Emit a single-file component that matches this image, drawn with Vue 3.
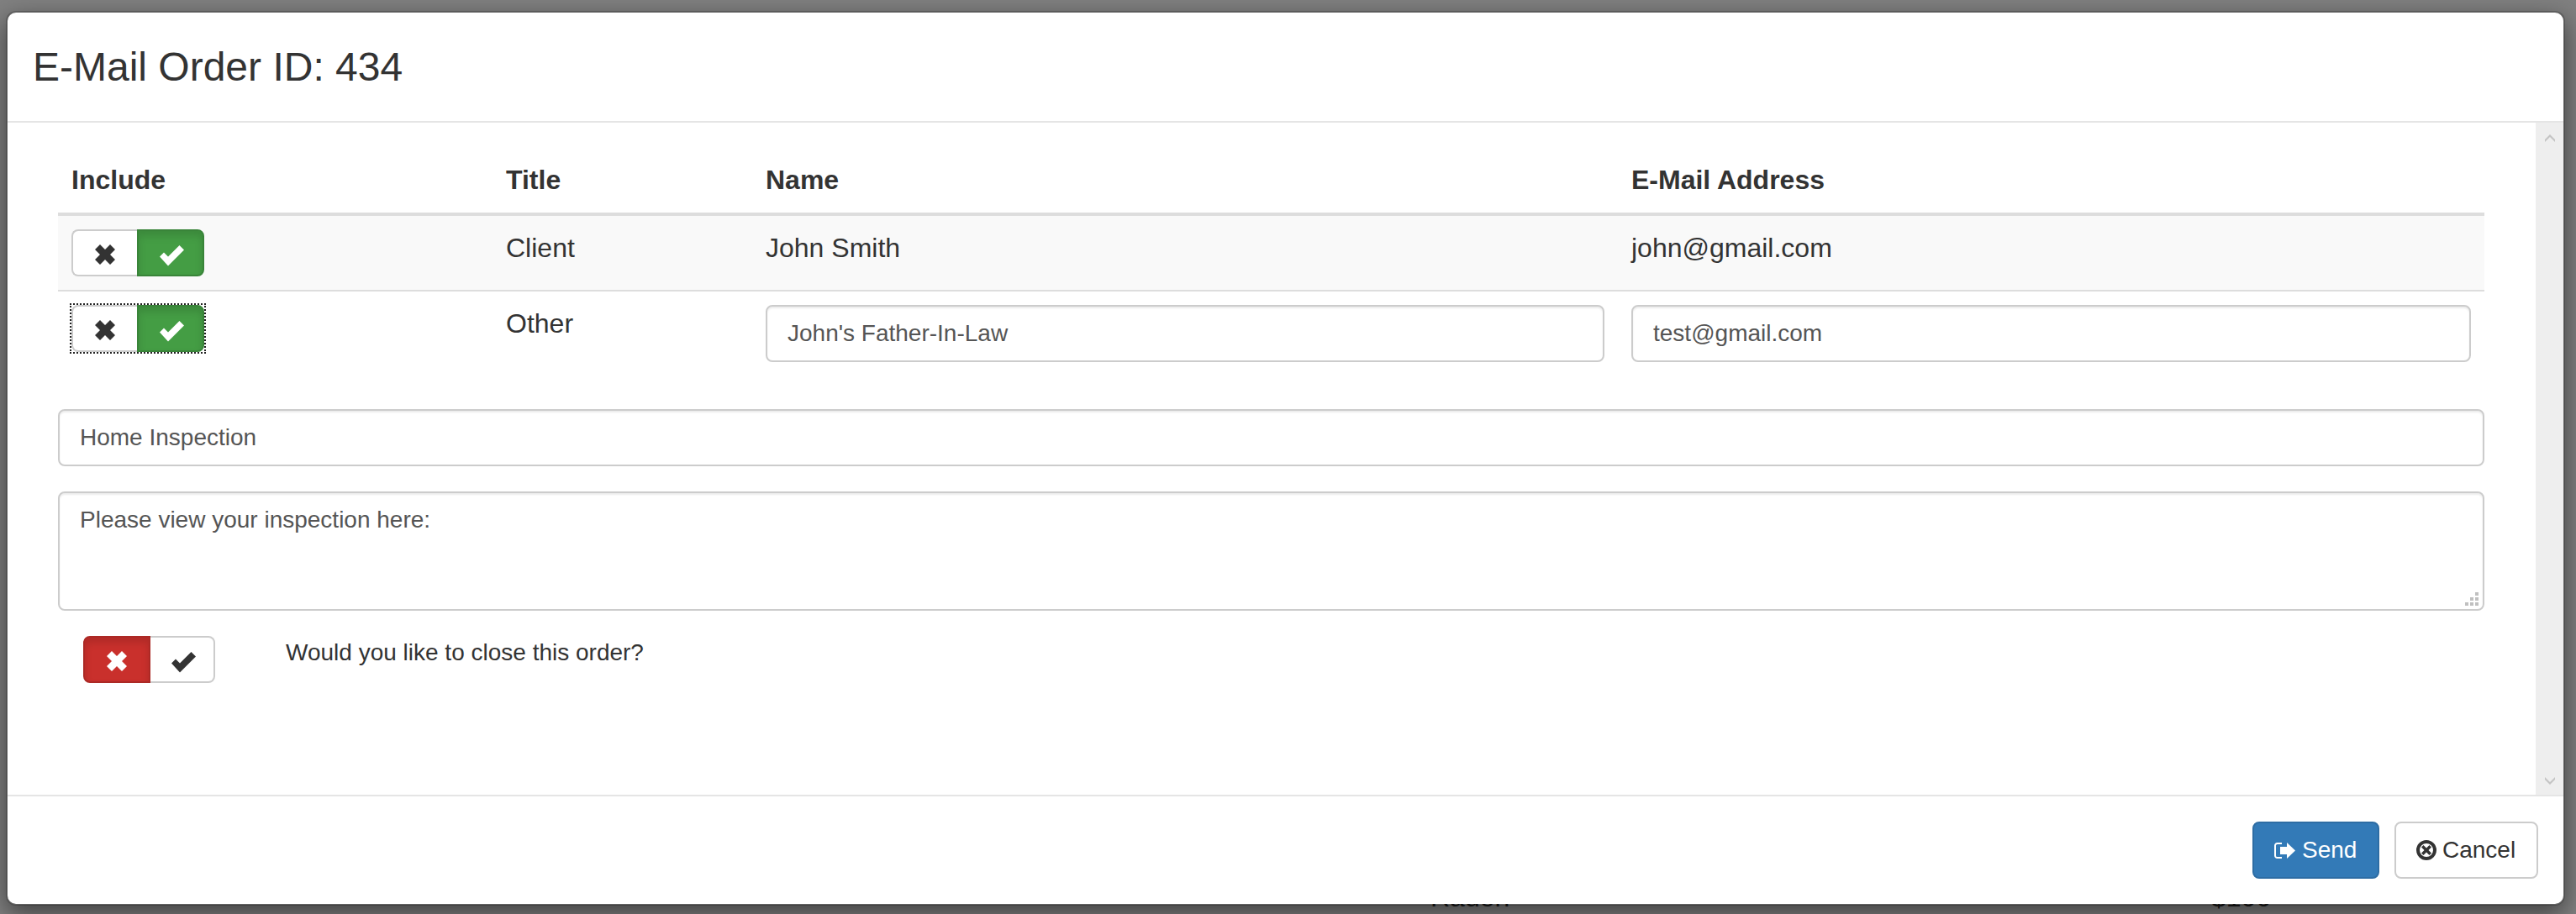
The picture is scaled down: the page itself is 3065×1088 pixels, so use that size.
<script setup>
const X = '0,6 6,0 12,6 18,0 24,6 18,12 24,18 18,24 12,18 6,24 0,18 6,12'
const CHECK = '0,13.5 5,8.5 10,13.5 23.5,0 29,5.5 10,24.5'
</script>

<template>
  <div class="page">
    <span class="under radon">Radon</span>
    <span class="under price">$100</span>

    <div class="modal">
      <header class="modal-header">
        <h3 class="modal-title">E-Mail Order ID: 434</h3>
      </header>

      <div class="modal-middle">
        <main class="modal-body">
          <table class="recipients">
            <colgroup>
              <col class="c1" /><col class="c2" /><col class="c3" /><col class="c4" />
            </colgroup>
            <thead>
              <tr>
                <th>Include</th>
                <th>Title</th>
                <th>Name</th>
                <th>E-Mail Address</th>
              </tr>
            </thead>
            <tbody>
              <tr class="striped">
                <td>
                  <div class="toggle">
                    <span class="seg off plain">
                      <svg class="ico-x" viewBox="0 0 24 24"><polygon :points="X" /></svg>
                    </span>
                    <span class="seg on green">
                      <svg class="ico-ok" viewBox="0 0 29 25"><polygon :points="CHECK" /></svg>
                    </span>
                  </div>
                </td>
                <td>Client</td>
                <td>John Smith</td>
                <td>john@gmail.com</td>
              </tr>
              <tr>
                <td>
                  <div class="toggle focused">
                    <span class="seg off plain">
                      <svg class="ico-x" viewBox="0 0 24 24"><polygon :points="X" /></svg>
                    </span>
                    <span class="seg on green">
                      <svg class="ico-ok" viewBox="0 0 29 25"><polygon :points="CHECK" /></svg>
                    </span>
                  </div>
                </td>
                <td>Other</td>
                <td><input class="control" type="text" value="John's Father-In-Law" /></td>
                <td><input class="control" type="text" value="test@gmail.com" /></td>
              </tr>
            </tbody>
          </table>

          <input class="control subject" type="text" value="Home Inspection" />

          <div class="area-wrap">
            <textarea class="control area">Please view your inspection here:</textarea>
            <svg class="grip" viewBox="0 0 16 16">
              <rect x="12" y="0" width="4" height="4" />
              <rect x="6" y="6" width="4" height="4" />
              <rect x="12" y="6" width="4" height="4" />
              <rect x="0" y="12" width="4" height="4" />
              <rect x="6" y="12" width="4" height="4" />
              <rect x="12" y="12" width="4" height="4" />
            </svg>
          </div>

          <div class="close-row">
            <div class="toggle">
              <span class="seg first red">
                <svg class="ico-x" viewBox="0 0 24 24"><polygon :points="X" /></svg>
              </span>
              <span class="seg last plain">
                <svg class="ico-ok" viewBox="0 0 29 25"><polygon :points="CHECK" /></svg>
              </span>
            </div>
            <span class="close-label">Would you like to close this order?</span>
          </div>
        </main>

        <aside class="scrollbar">
          <svg class="chev" viewBox="0 0 12 9"><path d="M0 6 6 0l6 6v3L6 3 0 9z" /></svg>
          <svg class="chev" viewBox="0 0 12 9"><path d="M0 0l6 6 6-6v3L6 9 0 3z" /></svg>
        </aside>
      </div>

      <footer class="modal-footer">
        <button class="btn primary" type="button">
          <svg class="ico-send" viewBox="0 0 25 19">
            <path class="bracket" d="M9 1H3.5A2.5 2.5 0 0 0 1 3.5v12A2.5 2.5 0 0 0 3.5 18H9" />
            <polygon points="7,5 15,5 15,0 25,9.5 15,19 15,14 7,14" />
          </svg>
          <span>Send</span>
        </button>
        <button class="btn default" type="button">
          <svg class="ico-cancel" viewBox="0 0 24 24">
            <circle class="ring" cx="12" cy="12" r="10" />
            <polygon points="8.5,6 12,9.5 15.5,6 18,8.5 14.5,12 18,15.5 15.5,18 12,14.5 8.5,18 6,15.5 9.5,12 6,8.5" />
          </svg>
          <span>Cancel</span>
        </button>
      </footer>
    </div>
  </div>
</template>

<style>
html,
body {
  margin: 0;
  background: #808080;
}
</style>

<style scoped>
.page {
  position: relative;
  box-sizing: border-box;
  width: 3065px;
  height: 1088px;
  padding: 13px 0 0 7px;
  overflow: hidden;
  background: #808080;
  font-family: "Liberation Sans", Arial, sans-serif;
  color: #333;
}

.under {
  position: absolute;
  top: 1050px;
  font-size: 32px;
  line-height: 36px;
  color: #1a1a1a;
}
.radon { left: 1702px; }
.price { left: 2631px; }

.modal {
  position: relative;
  box-sizing: border-box;
  width: 3045px;
  height: 1065px;
  display: flex;
  flex-direction: column;
  background: #fff;
  background-clip: padding-box;
  border: 2px solid rgba(0, 0, 0, 0.2);
  border-radius: 12px;
  box-shadow: 0 10px 30px rgba(0, 0, 0, 0.5);
}

.modal-header {
  box-sizing: border-box;
  height: 131px;
  flex: none;
  display: flex;
  align-items: center;
  padding: 0 30px;
  border-bottom: 2px solid #e5e5e5;
}
.modal-title {
  margin: 0;
  font-size: 48px;
  font-weight: 400;
  line-height: 53px;
}

.modal-middle {
  flex: 1;
  min-height: 0;
  display: flex;
}
.modal-body {
  box-sizing: border-box;
  flex: 1;
  min-width: 0;
  padding: 30px 61px 0 60px;
}

.scrollbar {
  width: 33px;
  flex: none;
  display: flex;
  flex-direction: column;
  align-items: center;
  justify-content: space-between;
  padding: 14px 0 12px;
  background: #eee;
  box-sizing: border-box;
}
.chev {
  width: 12px;
  height: 9px;
  fill: #c4c4c4;
}

.recipients {
  width: 100%;
  table-layout: fixed;
  border-collapse: separate;
  border-spacing: 0;
  margin-bottom: 40px;
  font-size: 32px;
  line-height: 45px;
}
.c1 { width: 517px; }
.c2 { width: 309px; }
.c3 { width: 1030px; }
.c4 { width: 1031px; }

.recipients th {
  box-sizing: border-box;
  height: 81px;
  padding: 16px;
  text-align: left;
  font-weight: 700;
  border-bottom: 4px solid #ddd;
}
.recipients td {
  padding: 16px;
  vertical-align: top;
}
.striped td {
  background: #f9f9f9;
  border-bottom: 2px solid #ddd;
}

.control {
  box-sizing: border-box;
  display: block;
  width: 100%;
  height: 68px;
  margin: 0;
  padding: 12px 24px;
  background: #fff;
  border: 2px solid #ccc;
  border-radius: 8px;
  box-shadow: inset 0 2px 2px rgba(0, 0, 0, 0.075);
  font-family: inherit;
  font-size: 28px;
  line-height: 40px;
  color: #555;
  outline: none;
}
.area-wrap {
  position: relative;
  margin-top: 30px;
}
.area {
  height: 142px;
  resize: none;
  overflow: hidden;
}
.grip {
  position: absolute;
  right: 7px;
  bottom: 6px;
  width: 16px;
  height: 16px;
  fill: #c0c0c0;
}

.toggle {
  display: inline-flex;
  vertical-align: top;
  height: 56px;
}
.toggle.focused {
  outline: 2px dotted #222;
}
.seg {
  box-sizing: border-box;
  height: 56px;
  display: flex;
  align-items: center;
  justify-content: center;
  padding-top: 4px;
  border: 2px solid #ccc;
}
.off { width: 78px; border-radius: 8px 0 0 8px; border-right: 0; }
.on { width: 80px; padding-left: 3px; border-radius: 0 8px 8px 0; }
.first { width: 80px; border-radius: 8px 0 0 8px; }
.last { width: 77px; padding-left: 4px; border-radius: 0 8px 8px 0; border-left: 0; }

.plain { background: #fff; fill: #333; }
.green {
  background: #449d44;
  border-color: #398439;
  box-shadow: inset 0 6px 10px rgba(0, 0, 0, 0.125);
  fill: #fff;
}
.red {
  background: #c9302c;
  border-color: #ac2925;
  box-shadow: inset 0 6px 10px rgba(0, 0, 0, 0.125);
  fill: #fff;
}
.ico-x { width: 24px; height: 24px; }
.ico-ok { width: 29px; height: 25px; margin-top: 2px; }

.close-row {
  display: flex;
  align-items: flex-start;
  gap: 84px;
  margin: 30px 0 0 30px;
}
.close-label {
  font-size: 28px;
  line-height: 40px;
}

.modal-footer {
  box-sizing: border-box;
  height: 130px;
  flex: none;
  display: flex;
  justify-content: flex-end;
  gap: 18px;
  padding: 30px;
  border-top: 2px solid #e5e5e5;
}
.btn {
  box-sizing: border-box;
  height: 68px;
  display: flex;
  align-items: center;
  margin: 0;
  padding: 0 24px;
  border: 2px solid #ccc;
  border-radius: 8px;
  font-family: inherit;
  font-size: 28px;
  line-height: 40px;
}
.primary {
  width: 151px;
  gap: 8px;
  background: #337ab7;
  border-color: #2e6da4;
  color: #fff;
  fill: #fff;
}
.default {
  width: 171px;
  gap: 7px;
  background: #fff;
  color: #333;
  fill: #333;
}
.ico-send { width: 25px; height: 19px; }
.bracket { fill: none; stroke: #fff; stroke-width: 2; }
.ico-cancel { width: 24px; height: 24px; }
.ring { fill: none; stroke: #333; stroke-width: 4; }
</style>
